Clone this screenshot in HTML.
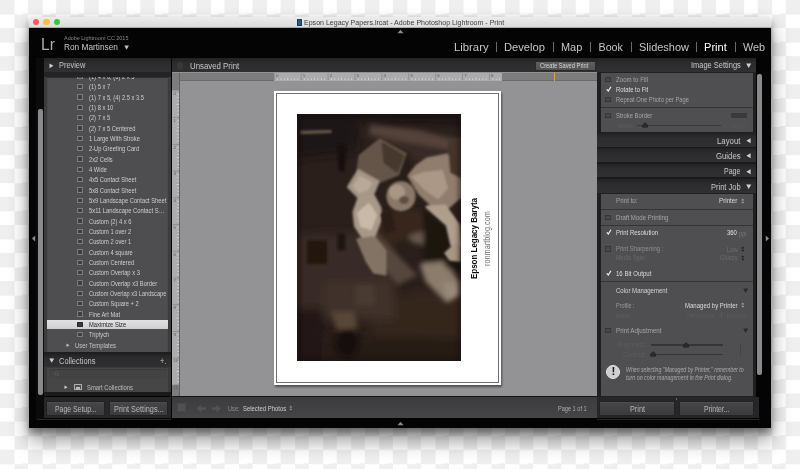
<!DOCTYPE html>
<html><head><meta charset="utf-8"><title>Epson Legacy Papers.lrcat - Adobe Photoshop Lightroom - Print</title>
<style>
html,body{margin:0;padding:0;}
body{width:800px;height:469px;overflow:hidden;position:relative;background:#fff;font-family:"Liberation Sans",sans-serif;}
#root{will-change:transform;position:absolute;left:0;top:0;width:800px;height:469px;overflow:hidden;
 background:conic-gradient(#fff 25%,#efefef 0 50%,#fff 0 75%,#efefef 0) 0 0/28.07px 28.12px;}
#root div{position:absolute;box-sizing:border-box;}
.t{position:absolute;white-space:nowrap;transform-origin:0 50%;}
svg{position:absolute;overflow:visible;}
</style></head><body><div id="root">
<div style="left:28.90px;top:16.60px;width:742.40px;height:411.00px;box-shadow:0 12px 20px rgba(0,0,0,.42),0 4px 7px rgba(0,0,0,.36);border-radius:2.5px 2.5px 0 0;"></div>
<div style="left:28.90px;top:22.60px;width:742.40px;height:405.00px;background:#040404;"></div>
<div style="left:28.90px;top:16.60px;width:742.40px;height:11.00px;background:linear-gradient(#ececec,#dbdbdb);border-radius:2.5px 2.5px 0 0;border-bottom:0.5px solid #aaa;"></div>
<div style="left:33.10px;top:18.90px;width:6.40px;height:6.40px;border-radius:50%;background:#fc5753;"></div>
<div style="left:43.40px;top:18.90px;width:6.40px;height:6.40px;border-radius:50%;background:#fdbc40;"></div>
<div style="left:53.80px;top:18.90px;width:6.40px;height:6.40px;border-radius:50%;background:#33c748;"></div>
<div style="left:296.60px;top:18.90px;width:5.00px;height:7.00px;background:#2b5a8c;border-radius:0.5px;border:0.5px solid #1d3550;"></div>
<span class="t" style="left:303.60px;top:18.88px;font-size:7.20px;line-height:8.64px;color:#3c3c3c;transform:scaleX(0.9803);">Epson Legacy Papers.lrcat - Adobe Photoshop Lightroom - Print</span>
<span class="t" style="left:40.60px;top:34.56px;font-size:16.40px;line-height:19.68px;color:#adadad;transform:scaleX(0.9463);">Lr</span>
<span class="t" style="left:63.80px;top:35.44px;font-size:5.60px;line-height:6.72px;color:#8c8c8c;transform:scaleX(0.9727);">Adobe Lightroom CC 2015</span>
<span class="t" style="left:63.80px;top:41.84px;font-size:8.60px;line-height:10.32px;color:#c9c9c9;transform:scaleX(0.9655);">Ron Martinsen</span>
<svg style="left:124px;top:44.5px" width="6" height="6"><path d="M0.3 0.5h4.6l-2.3 4.2z" fill="#c0c0c0"/></svg>
<span class="t" style="left:453.60px;top:40.78px;font-size:10.70px;line-height:12.84px;color:#c6c6c6;transform:scaleX(1.0579);">Library</span>
<span class="t" style="left:504.00px;top:40.78px;font-size:10.70px;line-height:12.84px;color:#c6c6c6;transform:scaleX(1.0443);">Develop</span>
<span class="t" style="left:561.00px;top:40.78px;font-size:10.70px;line-height:12.84px;color:#c6c6c6;transform:scaleX(1.0233);">Map</span>
<span class="t" style="left:598.50px;top:40.78px;font-size:10.70px;line-height:12.84px;color:#c6c6c6;">Book</span>
<span class="t" style="left:639.00px;top:40.78px;font-size:10.70px;line-height:12.84px;color:#c6c6c6;transform:scaleX(1.0251);">Slideshow</span>
<span class="t" style="left:704.20px;top:40.78px;font-size:10.70px;line-height:12.84px;color:#ffffff;transform:scaleX(1.0363);">Print</span>
<span class="t" style="left:743.00px;top:40.78px;font-size:10.70px;line-height:12.84px;color:#c6c6c6;transform:scaleX(1.0088);">Web</span>
<div style="left:495.60px;top:42.30px;width:0.90px;height:10.00px;background:#6a6a6a;"></div>
<div style="left:552.60px;top:42.30px;width:0.90px;height:10.00px;background:#6a6a6a;"></div>
<div style="left:590.10px;top:42.30px;width:0.90px;height:10.00px;background:#6a6a6a;"></div>
<div style="left:630.60px;top:42.30px;width:0.90px;height:10.00px;background:#6a6a6a;"></div>
<div style="left:696.30px;top:42.30px;width:0.90px;height:10.00px;background:#6a6a6a;"></div>
<div style="left:734.60px;top:42.30px;width:0.90px;height:10.00px;background:#6a6a6a;"></div>
<svg style="left:397px;top:29.4px" width="8" height="5"><path d="M0.5 4.2h6l-3-3.4z" fill="#8a8a8a"/></svg>
<svg style="left:397px;top:420.5px" width="8" height="5"><path d="M0.5 4.2h6l-3-3.4z" fill="#8a8a8a"/></svg>
<svg style="left:31px;top:235.3px" width="5" height="8"><path d="M4.2 0.6v6l-3.2-3z" fill="#8e8e8e"/></svg>
<svg style="left:764.9px;top:235.3px" width="5" height="8"><path d="M0.8 0.6v6l3.2-3z" fill="#8e8e8e"/></svg>
<div style="left:36.00px;top:57.80px;width:7.80px;height:361.40px;background:#0b0b0b;"></div>
<div style="left:38.10px;top:108.70px;width:4.60px;height:286.30px;background:#8a8a8c;border-radius:2px;"></div>
<div style="left:43.80px;top:58.20px;width:127.20px;height:14.20px;background:linear-gradient(#222223,#2c2b2d 35%,#302f31);"></div>
<svg style="left:49px;top:63.1px" width="6" height="6"><path d="M0.5 0.4v4.8l4-2.4z" fill="#d0d0d0"/></svg>
<span class="t" style="left:58.70px;top:60.10px;font-size:8.50px;line-height:10.20px;color:#c4c4c4;transform:scaleX(0.8699);">Preview</span>
<div style="left:43.80px;top:72.40px;width:127.20px;height:5.00px;background:#232323;"></div>
<div style="left:43.80px;top:77.20px;width:127.20px;height:274.60px;background:#3c3c3c;"></div>
<div style="left:47.00px;top:77.20px;width:120.80px;height:274.60px;background:#4e4e50;box-shadow:inset 0 1px 1px #2c2c2c;"></div>
<div style="left:43.80px;top:77.4px;width:127.20px;height:273.6px;overflow:hidden;">
<div style="left:33.40px;top:-3.73px;width:6.00px;height:5.40px;border:0.7px solid #7c7c7c;background:#3f3f3f;border-radius:0.5px;"></div>
<span class="t" style="left:44.80px;top:-4.33px;font-size:6.50px;line-height:7.80px;color:#cecece;transform:scaleX(0.8850);">(1) 4 x 6, (6) 2 x 3</span>
<div style="left:33.40px;top:6.60px;width:6.00px;height:5.40px;border:0.7px solid #7c7c7c;background:#3f3f3f;border-radius:0.5px;"></div>
<span class="t" style="left:44.80px;top:6.00px;font-size:6.50px;line-height:7.80px;color:#cecece;transform:scaleX(0.8850);">(1) 5 x 7</span>
<div style="left:33.40px;top:16.93px;width:6.00px;height:5.40px;border:0.7px solid #7c7c7c;background:#3f3f3f;border-radius:0.5px;"></div>
<span class="t" style="left:44.80px;top:16.33px;font-size:6.50px;line-height:7.80px;color:#cecece;transform:scaleX(0.8850);">(1) 7 x 5, (4) 2.5 x 3.5</span>
<div style="left:33.40px;top:27.27px;width:6.00px;height:5.40px;border:0.7px solid #7c7c7c;background:#3f3f3f;border-radius:0.5px;"></div>
<span class="t" style="left:44.80px;top:26.67px;font-size:6.50px;line-height:7.80px;color:#cecece;transform:scaleX(0.8850);">(1) 8 x 10</span>
<div style="left:33.40px;top:37.60px;width:6.00px;height:5.40px;border:0.7px solid #7c7c7c;background:#3f3f3f;border-radius:0.5px;"></div>
<span class="t" style="left:44.80px;top:37.00px;font-size:6.50px;line-height:7.80px;color:#cecece;transform:scaleX(0.8850);">(2) 7 x 5</span>
<div style="left:33.40px;top:47.93px;width:6.00px;height:5.40px;border:0.7px solid #7c7c7c;background:#3f3f3f;border-radius:0.5px;"></div>
<span class="t" style="left:44.80px;top:47.33px;font-size:6.50px;line-height:7.80px;color:#cecece;transform:scaleX(0.8850);">(2) 7 x 5 Centered</span>
<div style="left:33.40px;top:58.26px;width:6.00px;height:5.40px;border:0.7px solid #7c7c7c;background:#3f3f3f;border-radius:0.5px;"></div>
<span class="t" style="left:44.80px;top:57.66px;font-size:6.50px;line-height:7.80px;color:#cecece;transform:scaleX(0.8850);">1 Large With Stroke</span>
<div style="left:33.40px;top:68.60px;width:6.00px;height:5.40px;border:0.7px solid #7c7c7c;background:#3f3f3f;border-radius:0.5px;"></div>
<span class="t" style="left:44.80px;top:68.00px;font-size:6.50px;line-height:7.80px;color:#cecece;transform:scaleX(0.8850);">2-Up Greeting Card</span>
<div style="left:33.40px;top:78.93px;width:6.00px;height:5.40px;border:0.7px solid #7c7c7c;background:#3f3f3f;border-radius:0.5px;"></div>
<span class="t" style="left:44.80px;top:78.33px;font-size:6.50px;line-height:7.80px;color:#cecece;transform:scaleX(0.8850);">2x2 Cells</span>
<div style="left:33.40px;top:89.26px;width:6.00px;height:5.40px;border:0.7px solid #7c7c7c;background:#3f3f3f;border-radius:0.5px;"></div>
<span class="t" style="left:44.80px;top:88.66px;font-size:6.50px;line-height:7.80px;color:#cecece;transform:scaleX(0.8850);">4 Wide</span>
<div style="left:33.40px;top:99.60px;width:6.00px;height:5.40px;border:0.7px solid #7c7c7c;background:#3f3f3f;border-radius:0.5px;"></div>
<span class="t" style="left:44.80px;top:99.00px;font-size:6.50px;line-height:7.80px;color:#cecece;transform:scaleX(0.8850);">4x5 Contact Sheet</span>
<div style="left:33.40px;top:109.93px;width:6.00px;height:5.40px;border:0.7px solid #7c7c7c;background:#3f3f3f;border-radius:0.5px;"></div>
<span class="t" style="left:44.80px;top:109.33px;font-size:6.50px;line-height:7.80px;color:#cecece;transform:scaleX(0.8850);">5x8 Contact Sheet</span>
<div style="left:33.40px;top:120.26px;width:6.00px;height:5.40px;border:0.7px solid #7c7c7c;background:#3f3f3f;border-radius:0.5px;"></div>
<span class="t" style="left:44.80px;top:119.66px;font-size:6.50px;line-height:7.80px;color:#cecece;transform:scaleX(0.8876);">5x9 Landscape Contact Sheet</span>
<div style="left:33.40px;top:130.60px;width:6.00px;height:5.40px;border:0.7px solid #7c7c7c;background:#3f3f3f;border-radius:0.5px;"></div>
<span class="t" style="left:44.80px;top:130.00px;font-size:6.50px;line-height:7.80px;color:#cecece;transform:scaleX(0.8980);">5x11 Landscape Contact S…</span>
<div style="left:33.40px;top:140.93px;width:6.00px;height:5.40px;border:0.7px solid #7c7c7c;background:#3f3f3f;border-radius:0.5px;"></div>
<span class="t" style="left:44.80px;top:140.33px;font-size:6.50px;line-height:7.80px;color:#cecece;transform:scaleX(0.8850);">Custom (2) 4 x 6</span>
<div style="left:33.40px;top:151.26px;width:6.00px;height:5.40px;border:0.7px solid #7c7c7c;background:#3f3f3f;border-radius:0.5px;"></div>
<span class="t" style="left:44.80px;top:150.66px;font-size:6.50px;line-height:7.80px;color:#cecece;transform:scaleX(0.8850);">Custom 1 over 2</span>
<div style="left:33.40px;top:161.59px;width:6.00px;height:5.40px;border:0.7px solid #7c7c7c;background:#3f3f3f;border-radius:0.5px;"></div>
<span class="t" style="left:44.80px;top:161.00px;font-size:6.50px;line-height:7.80px;color:#cecece;transform:scaleX(0.8850);">Custom 2 over 1</span>
<div style="left:33.40px;top:171.93px;width:6.00px;height:5.40px;border:0.7px solid #7c7c7c;background:#3f3f3f;border-radius:0.5px;"></div>
<span class="t" style="left:44.80px;top:171.33px;font-size:6.50px;line-height:7.80px;color:#cecece;transform:scaleX(0.8850);">Custom 4 square</span>
<div style="left:33.40px;top:182.26px;width:6.00px;height:5.40px;border:0.7px solid #7c7c7c;background:#3f3f3f;border-radius:0.5px;"></div>
<span class="t" style="left:44.80px;top:181.66px;font-size:6.50px;line-height:7.80px;color:#cecece;transform:scaleX(0.8850);">Custom Centered</span>
<div style="left:33.40px;top:192.59px;width:6.00px;height:5.40px;border:0.7px solid #7c7c7c;background:#3f3f3f;border-radius:0.5px;"></div>
<span class="t" style="left:44.80px;top:191.99px;font-size:6.50px;line-height:7.80px;color:#cecece;transform:scaleX(0.8850);">Custom Overlap x 3</span>
<div style="left:33.40px;top:202.93px;width:6.00px;height:5.40px;border:0.7px solid #7c7c7c;background:#3f3f3f;border-radius:0.5px;"></div>
<span class="t" style="left:44.80px;top:202.33px;font-size:6.50px;line-height:7.80px;color:#cecece;transform:scaleX(0.8850);">Custom Overlap x3 Border</span>
<div style="left:33.40px;top:213.26px;width:6.00px;height:5.40px;border:0.7px solid #7c7c7c;background:#3f3f3f;border-radius:0.5px;"></div>
<span class="t" style="left:44.80px;top:212.66px;font-size:6.50px;line-height:7.80px;color:#cecece;transform:scaleX(0.8662);">Custom Overlap x3 Landscape</span>
<div style="left:33.40px;top:223.59px;width:6.00px;height:5.40px;border:0.7px solid #7c7c7c;background:#3f3f3f;border-radius:0.5px;"></div>
<span class="t" style="left:44.80px;top:222.99px;font-size:6.50px;line-height:7.80px;color:#cecece;transform:scaleX(0.8850);">Custom Square + 2</span>
<div style="left:33.40px;top:233.93px;width:6.00px;height:5.40px;border:0.7px solid #7c7c7c;background:#3f3f3f;border-radius:0.5px;"></div>
<span class="t" style="left:44.80px;top:233.33px;font-size:6.50px;line-height:7.80px;color:#cecece;transform:scaleX(0.8850);">Fine Art Mat</span>
<div style="left:3.20px;top:243.06px;width:120.80px;height:8.60px;background:linear-gradient(#e2e2e2,#cfcfcf);"></div>
<div style="left:33.40px;top:244.26px;width:6.00px;height:5.40px;border:0.7px solid #2a2a2a;background:#3a3a3a;border-radius:0.5px;"></div>
<span class="t" style="left:44.80px;top:243.66px;font-size:6.50px;line-height:7.80px;color:#1e1e1e;transform:scaleX(0.8850);">Maximize Size</span>
<div style="left:33.40px;top:254.59px;width:6.00px;height:5.40px;border:0.7px solid #7c7c7c;background:#3f3f3f;border-radius:0.5px;"></div>
<span class="t" style="left:44.80px;top:253.99px;font-size:6.50px;line-height:7.80px;color:#cecece;transform:scaleX(0.8850);">Triptych</span>
<svg style="left:22.00px;top:265.80px" width="5" height="5"><path d="M0.5 0.4v3.6l3-1.8z" fill="#c0c0c0"/></svg>
<span class="t" style="left:31.40px;top:264.50px;font-size:6.50px;line-height:7.80px;color:#c4c4c4;transform:scaleX(0.9103);">User Templates</span>
</div>
<div style="left:43.80px;top:351.80px;width:127.20px;height:2.20px;background:#1e1e1e;"></div>
<div style="left:43.80px;top:354.00px;width:127.20px;height:12.60px;background:linear-gradient(#222223,#2c2b2d 35%,#302f31);"></div>
<svg style="left:48.6px;top:358.2px" width="6" height="6"><path d="M0.3 0.5h4.8l-2.4 4.2z" fill="#d0d0d0"/></svg>
<span class="t" style="left:58.70px;top:355.70px;font-size:8.50px;line-height:10.20px;color:#c4c4c4;transform:scaleX(0.8779);">Collections</span>
<span class="t" style="left:159.80px;top:355.00px;font-size:9.50px;line-height:11.40px;color:#c8c8c8;transform:scaleX(0.7573);">+.</span>
<div style="left:43.80px;top:366.60px;width:127.20px;height:25.40px;background:#3a3a3a;"></div>
<div style="left:47.00px;top:367.60px;width:121.40px;height:24.40px;background:#464646;"></div>
<div style="left:48.60px;top:368.60px;width:118.00px;height:10.20px;background:#434343;border-top:0.8px solid #393939;border-radius:3px;"></div>
<svg style="left:53.5px;top:371px" width="6" height="6"><circle cx="2.4" cy="2.4" r="1.7" fill="none" stroke="#5c5c5c" stroke-width="0.8"/><path d="M3.6 3.6l1.6 1.6" stroke="#5c5c5c" stroke-width="0.8"/></svg>
<svg style="left:63.6px;top:384.9px" width="5" height="5"><path d="M0.5 0.4v3.6l3-1.8z" fill="#d0d0d0"/></svg>
<div style="left:73.80px;top:384.00px;width:8.60px;height:6.40px;border:0.8px solid #b0b0b0;background:#4f4f4f;border-radius:0.6px;"></div>
<div style="left:75.70px;top:386.80px;width:4.80px;height:2.00px;background:#bdbdbd;"></div>
<span class="t" style="left:87.00px;top:383.60px;font-size:6.50px;line-height:7.80px;color:#bcbcbc;transform:scaleX(0.9031);">Smart Collections</span>
<div style="left:43.80px;top:392.00px;width:127.20px;height:4.40px;background:#1b1b1b;"></div>
<div style="left:43.80px;top:396.60px;width:127.20px;height:21.40px;background:#272628;"></div>
<div style="left:37.30px;top:419.00px;width:133.70px;height:0.70px;background:#262626;"></div>
<div style="left:45.90px;top:401.00px;width:59.10px;height:15.00px;background:linear-gradient(#464548,#3b3a3d);border-radius:1.5px;border:0.6px solid #222;box-shadow:inset 0 0.6px 0 #56555a;"></div>
<span class="t" style="left:54.60px;top:403.70px;font-size:8.50px;line-height:10.20px;color:#b8b8b8;transform:scaleX(0.8095);">Page Setup...</span>
<div style="left:108.80px;top:401.00px;width:59.60px;height:15.00px;background:linear-gradient(#464548,#3b3a3d);border-radius:1.5px;border:0.6px solid #222;box-shadow:inset 0 0.6px 0 #56555a;"></div>
<span class="t" style="left:113.75px;top:403.70px;font-size:8.50px;line-height:10.20px;color:#b8b8b8;transform:scaleX(0.8623);">Print Settings...</span>
<div style="left:172.00px;top:58.20px;width:424.60px;height:14.80px;background:linear-gradient(#222223,#2c2b2d 35%,#302f31);"></div>
<div style="left:176.50px;top:61.60px;width:6.00px;height:8.00px;background:#383838;border-radius:3px;"></div>
<span class="t" style="left:190.00px;top:60.60px;font-size:8.50px;line-height:10.20px;color:#c6c6c6;transform:scaleX(0.9216);">Unsaved Print</span>
<div style="left:534.80px;top:61.00px;width:60.80px;height:9.60px;background:linear-gradient(#606060,#525252);border-radius:1.2px;border:0.5px solid #2a2a2a;"></div>
<span class="t" style="left:540.20px;top:61.76px;font-size:6.90px;line-height:8.28px;color:#d6d6d6;transform:scaleX(0.8302);">Create Saved Print</span>
<div style="left:172.00px;top:72.40px;width:424.60px;height:323.80px;background:#939294;"></div>
<div style="left:172.00px;top:73.00px;width:424.60px;height:7.80px;background:#7c7c7c;border-bottom:0.7px solid #6a6a6a;"></div>
<div style="left:172.00px;top:73.00px;width:7.60px;height:323.20px;background:#7c7c7c;border-right:0.7px solid #606060;"></div>
<div style="left:273.60px;top:73.40px;width:228.20px;height:7.20px;background:#ababab;"></div>
<div style="left:172.40px;top:90.40px;width:6.60px;height:294.20px;background:#ababab;"></div>
<svg style="left:0;top:72.4px" width="800" height="8"><rect x="273.90" y="1.20" width="0.8" height="7.00" fill="#8a8a8a"/><rect x="277.26" y="6.50" width="0.8" height="1.70" fill="#dcdcdc"/><rect x="280.63" y="6.50" width="0.8" height="1.70" fill="#dcdcdc"/><rect x="283.99" y="6.50" width="0.8" height="1.70" fill="#dcdcdc"/><rect x="287.35" y="5.60" width="0.8" height="2.60" fill="#dcdcdc"/><rect x="290.71" y="6.50" width="0.8" height="1.70" fill="#dcdcdc"/><rect x="294.08" y="6.50" width="0.8" height="1.70" fill="#dcdcdc"/><rect x="297.44" y="6.50" width="0.8" height="1.70" fill="#dcdcdc"/><rect x="300.80" y="1.20" width="0.8" height="7.00" fill="#8a8a8a"/><rect x="304.16" y="6.50" width="0.8" height="1.70" fill="#dcdcdc"/><rect x="307.53" y="6.50" width="0.8" height="1.70" fill="#dcdcdc"/><rect x="310.89" y="6.50" width="0.8" height="1.70" fill="#dcdcdc"/><rect x="314.25" y="5.60" width="0.8" height="2.60" fill="#dcdcdc"/><rect x="317.61" y="6.50" width="0.8" height="1.70" fill="#dcdcdc"/><rect x="320.98" y="6.50" width="0.8" height="1.70" fill="#dcdcdc"/><rect x="324.34" y="6.50" width="0.8" height="1.70" fill="#dcdcdc"/><rect x="327.70" y="1.20" width="0.8" height="7.00" fill="#8a8a8a"/><rect x="331.06" y="6.50" width="0.8" height="1.70" fill="#dcdcdc"/><rect x="334.43" y="6.50" width="0.8" height="1.70" fill="#dcdcdc"/><rect x="337.79" y="6.50" width="0.8" height="1.70" fill="#dcdcdc"/><rect x="341.15" y="5.60" width="0.8" height="2.60" fill="#dcdcdc"/><rect x="344.51" y="6.50" width="0.8" height="1.70" fill="#dcdcdc"/><rect x="347.88" y="6.50" width="0.8" height="1.70" fill="#dcdcdc"/><rect x="351.24" y="6.50" width="0.8" height="1.70" fill="#dcdcdc"/><rect x="354.60" y="1.20" width="0.8" height="7.00" fill="#8a8a8a"/><rect x="357.96" y="6.50" width="0.8" height="1.70" fill="#dcdcdc"/><rect x="361.33" y="6.50" width="0.8" height="1.70" fill="#dcdcdc"/><rect x="364.69" y="6.50" width="0.8" height="1.70" fill="#dcdcdc"/><rect x="368.05" y="5.60" width="0.8" height="2.60" fill="#dcdcdc"/><rect x="371.41" y="6.50" width="0.8" height="1.70" fill="#dcdcdc"/><rect x="374.78" y="6.50" width="0.8" height="1.70" fill="#dcdcdc"/><rect x="378.14" y="6.50" width="0.8" height="1.70" fill="#dcdcdc"/><rect x="381.50" y="1.20" width="0.8" height="7.00" fill="#8a8a8a"/><rect x="384.86" y="6.50" width="0.8" height="1.70" fill="#dcdcdc"/><rect x="388.23" y="6.50" width="0.8" height="1.70" fill="#dcdcdc"/><rect x="391.59" y="6.50" width="0.8" height="1.70" fill="#dcdcdc"/><rect x="394.95" y="5.60" width="0.8" height="2.60" fill="#dcdcdc"/><rect x="398.31" y="6.50" width="0.8" height="1.70" fill="#dcdcdc"/><rect x="401.68" y="6.50" width="0.8" height="1.70" fill="#dcdcdc"/><rect x="405.04" y="6.50" width="0.8" height="1.70" fill="#dcdcdc"/><rect x="408.40" y="1.20" width="0.8" height="7.00" fill="#8a8a8a"/><rect x="411.76" y="6.50" width="0.8" height="1.70" fill="#dcdcdc"/><rect x="415.12" y="6.50" width="0.8" height="1.70" fill="#dcdcdc"/><rect x="418.49" y="6.50" width="0.8" height="1.70" fill="#dcdcdc"/><rect x="421.85" y="5.60" width="0.8" height="2.60" fill="#dcdcdc"/><rect x="425.21" y="6.50" width="0.8" height="1.70" fill="#dcdcdc"/><rect x="428.58" y="6.50" width="0.8" height="1.70" fill="#dcdcdc"/><rect x="431.94" y="6.50" width="0.8" height="1.70" fill="#dcdcdc"/><rect x="435.30" y="1.20" width="0.8" height="7.00" fill="#8a8a8a"/><rect x="438.66" y="6.50" width="0.8" height="1.70" fill="#dcdcdc"/><rect x="442.03" y="6.50" width="0.8" height="1.70" fill="#dcdcdc"/><rect x="445.39" y="6.50" width="0.8" height="1.70" fill="#dcdcdc"/><rect x="448.75" y="5.60" width="0.8" height="2.60" fill="#dcdcdc"/><rect x="452.11" y="6.50" width="0.8" height="1.70" fill="#dcdcdc"/><rect x="455.48" y="6.50" width="0.8" height="1.70" fill="#dcdcdc"/><rect x="458.84" y="6.50" width="0.8" height="1.70" fill="#dcdcdc"/><rect x="462.20" y="1.20" width="0.8" height="7.00" fill="#8a8a8a"/><rect x="465.56" y="6.50" width="0.8" height="1.70" fill="#dcdcdc"/><rect x="468.93" y="6.50" width="0.8" height="1.70" fill="#dcdcdc"/><rect x="472.29" y="6.50" width="0.8" height="1.70" fill="#dcdcdc"/><rect x="475.65" y="5.60" width="0.8" height="2.60" fill="#dcdcdc"/><rect x="479.01" y="6.50" width="0.8" height="1.70" fill="#dcdcdc"/><rect x="482.38" y="6.50" width="0.8" height="1.70" fill="#dcdcdc"/><rect x="485.74" y="6.50" width="0.8" height="1.70" fill="#dcdcdc"/><rect x="489.10" y="1.20" width="0.8" height="7.00" fill="#8a8a8a"/><rect x="492.46" y="6.50" width="0.8" height="1.70" fill="#dcdcdc"/><rect x="495.83" y="6.50" width="0.8" height="1.70" fill="#dcdcdc"/><rect x="499.19" y="6.50" width="0.8" height="1.70" fill="#dcdcdc"/></svg>
<span class="t" style="left:275.90px;top:73.46px;font-size:4.40px;line-height:5.28px;color:#5a5a5a;">0</span>
<span class="t" style="left:302.80px;top:73.46px;font-size:4.40px;line-height:5.28px;color:#5a5a5a;">1</span>
<span class="t" style="left:329.70px;top:73.46px;font-size:4.40px;line-height:5.28px;color:#5a5a5a;">2</span>
<span class="t" style="left:356.60px;top:73.46px;font-size:4.40px;line-height:5.28px;color:#5a5a5a;">3</span>
<span class="t" style="left:383.50px;top:73.46px;font-size:4.40px;line-height:5.28px;color:#5a5a5a;">4</span>
<span class="t" style="left:410.40px;top:73.46px;font-size:4.40px;line-height:5.28px;color:#5a5a5a;">5</span>
<span class="t" style="left:437.30px;top:73.46px;font-size:4.40px;line-height:5.28px;color:#5a5a5a;">6</span>
<span class="t" style="left:464.20px;top:73.46px;font-size:4.40px;line-height:5.28px;color:#5a5a5a;">7</span>
<span class="t" style="left:491.10px;top:73.46px;font-size:4.40px;line-height:5.28px;color:#5a5a5a;">8</span>
<svg style="left:0;top:0" width="800" height="469"><rect x="172.70" y="90.50" width="6.30" height="0.8" fill="#8a8a8a"/><rect x="177.40" y="93.84" width="1.60" height="0.8" fill="#dcdcdc"/><rect x="177.40" y="97.18" width="1.60" height="0.8" fill="#dcdcdc"/><rect x="177.40" y="100.52" width="1.60" height="0.8" fill="#dcdcdc"/><rect x="176.60" y="103.86" width="2.40" height="0.8" fill="#dcdcdc"/><rect x="177.40" y="107.20" width="1.60" height="0.8" fill="#dcdcdc"/><rect x="177.40" y="110.54" width="1.60" height="0.8" fill="#dcdcdc"/><rect x="177.40" y="113.88" width="1.60" height="0.8" fill="#dcdcdc"/><rect x="172.70" y="117.22" width="6.30" height="0.8" fill="#8a8a8a"/><rect x="177.40" y="120.56" width="1.60" height="0.8" fill="#dcdcdc"/><rect x="177.40" y="123.90" width="1.60" height="0.8" fill="#dcdcdc"/><rect x="177.40" y="127.24" width="1.60" height="0.8" fill="#dcdcdc"/><rect x="176.60" y="130.58" width="2.40" height="0.8" fill="#dcdcdc"/><rect x="177.40" y="133.92" width="1.60" height="0.8" fill="#dcdcdc"/><rect x="177.40" y="137.26" width="1.60" height="0.8" fill="#dcdcdc"/><rect x="177.40" y="140.60" width="1.60" height="0.8" fill="#dcdcdc"/><rect x="172.70" y="143.94" width="6.30" height="0.8" fill="#8a8a8a"/><rect x="177.40" y="147.28" width="1.60" height="0.8" fill="#dcdcdc"/><rect x="177.40" y="150.62" width="1.60" height="0.8" fill="#dcdcdc"/><rect x="177.40" y="153.96" width="1.60" height="0.8" fill="#dcdcdc"/><rect x="176.60" y="157.30" width="2.40" height="0.8" fill="#dcdcdc"/><rect x="177.40" y="160.64" width="1.60" height="0.8" fill="#dcdcdc"/><rect x="177.40" y="163.98" width="1.60" height="0.8" fill="#dcdcdc"/><rect x="177.40" y="167.32" width="1.60" height="0.8" fill="#dcdcdc"/><rect x="172.70" y="170.66" width="6.30" height="0.8" fill="#8a8a8a"/><rect x="177.40" y="174.00" width="1.60" height="0.8" fill="#dcdcdc"/><rect x="177.40" y="177.34" width="1.60" height="0.8" fill="#dcdcdc"/><rect x="177.40" y="180.68" width="1.60" height="0.8" fill="#dcdcdc"/><rect x="176.60" y="184.02" width="2.40" height="0.8" fill="#dcdcdc"/><rect x="177.40" y="187.36" width="1.60" height="0.8" fill="#dcdcdc"/><rect x="177.40" y="190.70" width="1.60" height="0.8" fill="#dcdcdc"/><rect x="177.40" y="194.04" width="1.60" height="0.8" fill="#dcdcdc"/><rect x="172.70" y="197.38" width="6.30" height="0.8" fill="#8a8a8a"/><rect x="177.40" y="200.72" width="1.60" height="0.8" fill="#dcdcdc"/><rect x="177.40" y="204.06" width="1.60" height="0.8" fill="#dcdcdc"/><rect x="177.40" y="207.40" width="1.60" height="0.8" fill="#dcdcdc"/><rect x="176.60" y="210.74" width="2.40" height="0.8" fill="#dcdcdc"/><rect x="177.40" y="214.08" width="1.60" height="0.8" fill="#dcdcdc"/><rect x="177.40" y="217.42" width="1.60" height="0.8" fill="#dcdcdc"/><rect x="177.40" y="220.76" width="1.60" height="0.8" fill="#dcdcdc"/><rect x="172.70" y="224.10" width="6.30" height="0.8" fill="#8a8a8a"/><rect x="177.40" y="227.44" width="1.60" height="0.8" fill="#dcdcdc"/><rect x="177.40" y="230.78" width="1.60" height="0.8" fill="#dcdcdc"/><rect x="177.40" y="234.12" width="1.60" height="0.8" fill="#dcdcdc"/><rect x="176.60" y="237.46" width="2.40" height="0.8" fill="#dcdcdc"/><rect x="177.40" y="240.80" width="1.60" height="0.8" fill="#dcdcdc"/><rect x="177.40" y="244.14" width="1.60" height="0.8" fill="#dcdcdc"/><rect x="177.40" y="247.48" width="1.60" height="0.8" fill="#dcdcdc"/><rect x="172.70" y="250.82" width="6.30" height="0.8" fill="#8a8a8a"/><rect x="177.40" y="254.16" width="1.60" height="0.8" fill="#dcdcdc"/><rect x="177.40" y="257.50" width="1.60" height="0.8" fill="#dcdcdc"/><rect x="177.40" y="260.84" width="1.60" height="0.8" fill="#dcdcdc"/><rect x="176.60" y="264.18" width="2.40" height="0.8" fill="#dcdcdc"/><rect x="177.40" y="267.52" width="1.60" height="0.8" fill="#dcdcdc"/><rect x="177.40" y="270.86" width="1.60" height="0.8" fill="#dcdcdc"/><rect x="177.40" y="274.20" width="1.60" height="0.8" fill="#dcdcdc"/><rect x="172.70" y="277.54" width="6.30" height="0.8" fill="#8a8a8a"/><rect x="177.40" y="280.88" width="1.60" height="0.8" fill="#dcdcdc"/><rect x="177.40" y="284.22" width="1.60" height="0.8" fill="#dcdcdc"/><rect x="177.40" y="287.56" width="1.60" height="0.8" fill="#dcdcdc"/><rect x="176.60" y="290.90" width="2.40" height="0.8" fill="#dcdcdc"/><rect x="177.40" y="294.24" width="1.60" height="0.8" fill="#dcdcdc"/><rect x="177.40" y="297.58" width="1.60" height="0.8" fill="#dcdcdc"/><rect x="177.40" y="300.92" width="1.60" height="0.8" fill="#dcdcdc"/><rect x="172.70" y="304.26" width="6.30" height="0.8" fill="#8a8a8a"/><rect x="177.40" y="307.60" width="1.60" height="0.8" fill="#dcdcdc"/><rect x="177.40" y="310.94" width="1.60" height="0.8" fill="#dcdcdc"/><rect x="177.40" y="314.28" width="1.60" height="0.8" fill="#dcdcdc"/><rect x="176.60" y="317.62" width="2.40" height="0.8" fill="#dcdcdc"/><rect x="177.40" y="320.96" width="1.60" height="0.8" fill="#dcdcdc"/><rect x="177.40" y="324.30" width="1.60" height="0.8" fill="#dcdcdc"/><rect x="177.40" y="327.64" width="1.60" height="0.8" fill="#dcdcdc"/><rect x="172.70" y="330.98" width="6.30" height="0.8" fill="#8a8a8a"/><rect x="177.40" y="334.32" width="1.60" height="0.8" fill="#dcdcdc"/><rect x="177.40" y="337.66" width="1.60" height="0.8" fill="#dcdcdc"/><rect x="177.40" y="341.00" width="1.60" height="0.8" fill="#dcdcdc"/><rect x="176.60" y="344.34" width="2.40" height="0.8" fill="#dcdcdc"/><rect x="177.40" y="347.68" width="1.60" height="0.8" fill="#dcdcdc"/><rect x="177.40" y="351.02" width="1.60" height="0.8" fill="#dcdcdc"/><rect x="177.40" y="354.36" width="1.60" height="0.8" fill="#dcdcdc"/><rect x="172.70" y="357.70" width="6.30" height="0.8" fill="#8a8a8a"/><rect x="177.40" y="361.04" width="1.60" height="0.8" fill="#dcdcdc"/><rect x="177.40" y="364.38" width="1.60" height="0.8" fill="#dcdcdc"/><rect x="177.40" y="367.72" width="1.60" height="0.8" fill="#dcdcdc"/><rect x="176.60" y="371.06" width="2.40" height="0.8" fill="#dcdcdc"/><rect x="177.40" y="374.40" width="1.60" height="0.8" fill="#dcdcdc"/><rect x="177.40" y="377.74" width="1.60" height="0.8" fill="#dcdcdc"/><rect x="177.40" y="381.08" width="1.60" height="0.8" fill="#dcdcdc"/><rect x="172.70" y="384.42" width="6.30" height="0.8" fill="#8a8a8a"/></svg>
<span class="t" style="left:173.40px;top:91.18px;font-size:4.20px;line-height:5.04px;color:#5a5a5a;">0</span>
<span class="t" style="left:173.40px;top:117.90px;font-size:4.20px;line-height:5.04px;color:#5a5a5a;">1</span>
<span class="t" style="left:173.40px;top:144.62px;font-size:4.20px;line-height:5.04px;color:#5a5a5a;">2</span>
<span class="t" style="left:173.40px;top:171.34px;font-size:4.20px;line-height:5.04px;color:#5a5a5a;">3</span>
<span class="t" style="left:173.40px;top:198.06px;font-size:4.20px;line-height:5.04px;color:#5a5a5a;">4</span>
<span class="t" style="left:173.40px;top:224.78px;font-size:4.20px;line-height:5.04px;color:#5a5a5a;">5</span>
<span class="t" style="left:173.40px;top:251.50px;font-size:4.20px;line-height:5.04px;color:#5a5a5a;">6</span>
<span class="t" style="left:173.40px;top:278.22px;font-size:4.20px;line-height:5.04px;color:#5a5a5a;">7</span>
<span class="t" style="left:173.40px;top:304.94px;font-size:4.20px;line-height:5.04px;color:#5a5a5a;">8</span>
<span class="t" style="left:173.40px;top:331.66px;font-size:4.20px;line-height:5.04px;color:#5a5a5a;">9</span>
<span class="t" style="left:173.40px;top:358.38px;font-size:4.20px;line-height:5.04px;color:#5a5a5a;">10</span>
<span class="t" style="left:173.40px;top:385.10px;font-size:4.20px;line-height:5.04px;color:#5a5a5a;">11</span>
<div style="left:553.90px;top:73.20px;width:0.90px;height:7.40px;background:#d9a441;"></div>
<div style="left:273.80px;top:90.70px;width:227.60px;height:294.00px;background:#fff;box-shadow:0.6px 1.6px 2px rgba(0,0,0,.45);"></div>
<div style="left:276.40px;top:92.80px;width:222.60px;height:289.80px;border:1.2px solid #707070;background:#fff;"></div>
<svg style="left:297.0px;top:114.1px;overflow:hidden" width="164.2" height="247.3" viewBox="0 0 164.2 247.3"><defs><filter id="b5" x="-40%" y="-40%" width="180%" height="180%"><feGaussianBlur stdDeviation="5"/></filter><filter id="b3" x="-30%" y="-30%" width="160%" height="160%"><feGaussianBlur stdDeviation="2.4"/></filter><filter id="b15" x="-30%" y="-30%" width="160%" height="160%"><feGaussianBlur stdDeviation="1.3"/></filter><filter id="b08" x="-30%" y="-30%" width="160%" height="160%"><feGaussianBlur stdDeviation="0.7"/></filter><clipPath id="pc"><rect x="0" y="0" width="164.2" height="247.3"/></clipPath></defs><g clip-path="url(#pc)"><rect x="0" y="0" width="164.2" height="247.3" fill="#2a1f1b"/><g filter="url(#b5)"><polygon points="-8,-8 62,-8 58,36 -8,44" fill="#1d1512" stroke="#1d1512" stroke-width="3" stroke-linejoin="round" opacity="1"/><polygon points="55,-8 175,-8 175,10 55,8" fill="#1e1613" stroke="#1e1613" stroke-width="3" stroke-linejoin="round" opacity="1"/><polygon points="66,16 175,26 175,48 118,46 90,30" fill="#392b25" stroke="#392b25" stroke-width="3" stroke-linejoin="round" opacity="1"/><polygon points="0,122 92,120 96,196 0,198" fill="#382b25" stroke="#382b25" stroke-width="3" stroke-linejoin="round" opacity="1"/><polygon points="78,190 126,178 175,184 175,226 74,232" fill="#34251e" stroke="#34251e" stroke-width="3" stroke-linejoin="round" opacity="1"/><polygon points="28,170 96,168 96,204 28,204" fill="#41332b" stroke="#41332b" stroke-width="3" stroke-linejoin="round" opacity="1"/><polygon points="-8,196 26,196 26,260 -8,260" fill="#221814" stroke="#221814" stroke-width="3" stroke-linejoin="round" opacity="1"/><polygon points="26,222 175,226 175,260 26,260" fill="#261b17" stroke="#261b17" stroke-width="3" stroke-linejoin="round" opacity="1"/></g><g filter="url(#b3)"><polygon points="74,12 120,17 164,29 164,37 118,29 74,20" fill="#54433a" stroke="#54433a" stroke-width="2" stroke-linejoin="round" opacity="1"/><polygon points="84,32 110,42 110,60 92,58" fill="#261c18" stroke="#261c18" stroke-width="3" stroke-linejoin="round" opacity="1"/><polygon points="80,100 122,97 126,112 112,124 90,128 80,116" fill="#37281f" stroke="#37281f" stroke-width="3" stroke-linejoin="round" opacity="1"/><polygon points="112,122 128,117 128,131 115,128" fill="#66574d" stroke="#66574d" stroke-width="1" stroke-linejoin="round" opacity="1"/><polygon points="128,98 150,112 154,132 146,148 128,148" fill="#1b1310" stroke="#1b1310" stroke-width="3" stroke-linejoin="round" opacity="1"/><polygon points="64,127 79,121 118,161 101,169" fill="#57463c" stroke="#57463c" stroke-width="3" stroke-linejoin="round" opacity="1"/><polygon points="124.5,151 146,149 162,169 162,180.5 150,187 130,167" fill="#8b7b6c" stroke="#8b7b6c" stroke-width="3" stroke-linejoin="round" opacity="1"/><polygon points="146,168 161,172 161,181 151,186" fill="#9a8a7b" stroke="#9a8a7b" stroke-width="1" stroke-linejoin="round" opacity="1"/><polygon points="146,142 166,140 166,158 150,152" fill="#1d1411" stroke="#1d1411" stroke-width="3" stroke-linejoin="round" opacity="1"/><ellipse cx="50" cy="229" rx="12" ry="14" fill="#19110e" opacity="1" transform="rotate(0 50 229)"/><polygon points="36,199 56,199 59,213 41,214.5" fill="#584638" stroke="#584638" stroke-width="3" stroke-linejoin="round" opacity="1"/><polygon points="60,172 76,172 76,190 60,190" fill="#4e3f35" stroke="#4e3f35" stroke-width="3" stroke-linejoin="round" opacity="0.7"/></g><g filter="url(#b15)"><polygon points="3.5,17.2 34,16.4 34.5,18.6 4,19.6" fill="#66574b" stroke="#66574b" stroke-width="1" stroke-linejoin="round" opacity="1"/><polygon points="11.5,128 28.4,128 28.4,148.5 11.5,148.5" fill="#20150f" stroke="#20150f" stroke-width="3" stroke-linejoin="round" opacity="1"/><polygon points="41,120 47.7,120 47.7,136 41,136" fill="#1e1411" stroke="#1e1411" stroke-width="1" stroke-linejoin="round" opacity="1"/><polygon points="63,42 83,26 108,40 101,60 82,67.5 61,56" fill="#65554a" stroke="#65554a" stroke-width="3" stroke-linejoin="round" opacity="1"/><polygon points="86,30 106,42 100,57 88,48" fill="#46372f" stroke="#46372f" stroke-width="3" stroke-linejoin="round" opacity="1"/><polygon points="51,73 61.2,56.2 81.6,67.5 77,78.8 61.2,83.3" fill="#a59587" stroke="#a59587" stroke-width="2" stroke-linejoin="round" opacity="1"/><polygon points="56,72 63,62 75,68.5 71,76 62,79" fill="#b8a999" stroke="#b8a999" stroke-width="1" stroke-linejoin="round" opacity="1"/><polygon points="112,62 120,52 130,45 150,41 153,60 164,66 164,82 150,94 137,93 123,80" fill="#917d6d" stroke="#917d6d" stroke-width="3" stroke-linejoin="round" opacity="1"/><polygon points="116,63 127,59 145,57 150,74 141,84 129,76" fill="#ac9887" stroke="#ac9887" stroke-width="2" stroke-linejoin="round" opacity="1"/><polygon points="152,28 166,24 166,64 154,58" fill="#45352c" stroke="#45352c" stroke-width="2" stroke-linejoin="round" opacity="1"/><ellipse cx="104" cy="82.2" rx="14.6" ry="15" fill="#8a7868" opacity="1" transform="rotate(0 104 82.2)"/><ellipse cx="100" cy="78" rx="8" ry="7.5" fill="#a99786" opacity="1" transform="rotate(0 100 78)"/><ellipse cx="107" cy="86" rx="5" ry="4" fill="#5f4e43" opacity="1" transform="rotate(0 107 86)"/><polygon points="130,93 148,92 161.6,111 162.7,131 154.8,131 150.3,111" fill="#b09e8d" stroke="#b09e8d" stroke-width="3" stroke-linejoin="round" opacity="1"/><polygon points="148,139 157,131 163,132.5 163,147 153,146" fill="#a89685" stroke="#a89685" stroke-width="1.5" stroke-linejoin="round" opacity="1"/><polygon points="57,98 62,84 76,81 83,94 83.5,105.3 77,122.4 66,123.5 58.5,112" fill="#a89888" stroke="#a89888" stroke-width="3" stroke-linejoin="round" opacity="1"/><polygon points="61,99 72,90 79,101 74,115 64,112" fill="#c8b9a9" stroke="#c8b9a9" stroke-width="2" stroke-linejoin="round" opacity="1"/><polygon points="61,125.7 77,123.4 88,137 88,160 77,158 70,147" fill="#837365" stroke="#837365" stroke-width="3" stroke-linejoin="round" opacity="1"/></g><g filter="url(#b15)"><polygon points="41,30 49,32 47,58 42,56" fill="#17100d" stroke="#17100d" stroke-width="1" stroke-linejoin="round" opacity="1"/><polygon points="84,100 94,97 98,116 88,119" fill="#2a1e19" stroke="#2a1e19" stroke-width="1" stroke-linejoin="round" opacity="1"/></g><rect x="-2" y="-2" width="168.2" height="251.3" fill="none" stroke="#120c0a" stroke-width="9" opacity="0.55" filter="url(#b3)"/></g></svg>
<span class="t" style="left:468.52px;top:279.00px;font-size:8.80px;line-height:10.56px;color:#0c0c0c;transform-origin:0 0;transform:rotate(-90deg) scaleX(0.9050);font-weight:bold;">Epson Legacy Baryta</span>
<span class="t" style="left:482.26px;top:266.00px;font-size:8.40px;line-height:10.08px;color:#747474;transform-origin:0 0;transform:rotate(-90deg) scaleX(0.8726);">ronmartblog.com</span>
<div style="left:172.00px;top:395.80px;width:424.60px;height:22.10px;background:linear-gradient(#3c3b3d,#454446);border-top:1.2px solid #141414;"></div>
<div style="left:176.60px;top:403.00px;width:9.60px;height:9.40px;background:#504f52;border:0.5px solid #48474a;"></div>
<svg style="left:195.5px;top:403.5px" width="26" height="10"><path d="M0.5 4.6l4.6-3.8v2.4h4.6v2.8h-4.6v2.4z" fill="#525154"/><path d="M25 4.6l-4.6-3.8v2.4h-4.6v2.8h4.6v2.4z" fill="#525154"/></svg>
<span class="t" style="left:227.60px;top:404.70px;font-size:7.00px;line-height:8.40px;color:#8d8d8d;transform:scaleX(0.8059);">Use:</span>
<span class="t" style="left:243.00px;top:404.70px;font-size:7.00px;line-height:8.40px;color:#cfcfcf;transform:scaleX(0.8474);">Selected Photos</span>
<svg style="left:289.4px;top:405.4px" width="4" height="7"><path d="M0.4 2.4l1.4-1.8 1.4 1.8zM0.4 3.8l1.4 1.8 1.4-1.8z" fill="#9a9a9a"/></svg>
<span class="t" style="left:557.60px;top:404.90px;font-size:7.00px;line-height:8.40px;color:#b0b0b0;transform:scaleX(0.7987);">Page 1 of 1</span>
<div style="left:597.20px;top:57.80px;width:158.60px;height:339.20px;background:#202021;"></div>
<div style="left:757.10px;top:73.70px;width:4.80px;height:301.50px;background:#8a8a8c;border-radius:2px;"></div>
<div style="left:597.20px;top:58.20px;width:158.60px;height:14.20px;background:linear-gradient(#222223,#2c2b2d 35%,#302f31);"></div>
<span class="t" style="left:690.70px;top:60.20px;font-size:8.50px;line-height:10.20px;color:#c9c9c9;transform:scaleX(0.8783);">Image Settings</span>
<svg style="left:746.10px;top:63.20px" width="6" height="6"><path d="M0.2 0.5h5l-2.5 4.4z" fill="#d0d0d0"/></svg>
<div style="left:600.80px;top:72.80px;width:152.50px;height:58.80px;background:#4f4e50;"></div>
<div style="left:600.80px;top:107.40px;width:152.50px;height:0.80px;background:#333;"></div>
<div style="left:605.40px;top:76.50px;width:5.60px;height:5.60px;border:0.8px solid #363636;background:#474747;"></div>
<span class="t" style="left:615.60px;top:75.70px;font-size:7.00px;line-height:8.40px;color:#a6a6a6;transform:scaleX(0.8752);">Zoom to Fill</span>
<svg style="left:605.90px;top:86.20px" width="7" height="7"><path d="M0.8 3.3l1.5 1.7L5.0 0.8" fill="none" stroke="#f4f4f4" stroke-width="1.15"/></svg>
<span class="t" style="left:615.60px;top:86.30px;font-size:7.00px;line-height:8.40px;color:#dedede;transform:scaleX(0.8445);">Rotate to Fit</span>
<div style="left:605.40px;top:96.90px;width:5.60px;height:5.60px;border:0.8px solid #363636;background:#474747;"></div>
<span class="t" style="left:615.60px;top:96.10px;font-size:7.00px;line-height:8.40px;color:#a6a6a6;transform:scaleX(0.8263);">Repeat One Photo per Page</span>
<div style="left:605.40px;top:112.90px;width:5.60px;height:5.60px;border:0.8px solid #363636;background:#474747;"></div>
<span class="t" style="left:615.60px;top:112.10px;font-size:7.00px;line-height:8.40px;color:#a6a6a6;transform:scaleX(0.8382);">Stroke Border</span>
<div style="left:731.20px;top:113.00px;width:15.60px;height:5.40px;background:#3a3a3a;"></div>
<span class="t" style="left:618.40px;top:122.62px;font-size:5.80px;line-height:6.96px;color:#5e5e5e;transform:scaleX(0.9848);">Width</span>
<div style="left:636.60px;top:125.00px;width:84.00px;height:1.30px;background:#383838;"></div>
<svg style="left:641.6px;top:122.4px" width="7" height="6"><path d="M0.5 5.2v-2.2l2.6-2.4 2.6 2.4v2.2z" fill="#2c2c2c" stroke="#1a1a1a" stroke-width="0.5"/></svg>
<span class="t" style="left:731.60px;top:122.62px;font-size:5.80px;line-height:6.96px;color:#5a5a5a;transform:scaleX(0.9648);">0.2 pt</span>
<div style="left:597.20px;top:133.00px;width:158.60px;height:13.60px;background:linear-gradient(#222223,#2c2b2d 35%,#302f31);"></div>
<div style="left:597.20px;top:146.60px;width:158.60px;height:1.80px;background:#1a1a1a;"></div>
<span class="t" style="left:717.10px;top:135.60px;font-size:8.50px;line-height:10.20px;color:#c9c9c9;transform:scaleX(0.9169);">Layout</span>
<svg style="left:746.00px;top:138.00px" width="6" height="6"><path d="M4.6 0.3v5l-4.2-2.5z" fill="#d0d0d0"/></svg>
<div style="left:597.20px;top:148.40px;width:158.60px;height:13.60px;background:linear-gradient(#222223,#2c2b2d 35%,#302f31);"></div>
<div style="left:597.20px;top:162.00px;width:158.60px;height:1.80px;background:#1a1a1a;"></div>
<span class="t" style="left:715.90px;top:151.00px;font-size:8.50px;line-height:10.20px;color:#c9c9c9;transform:scaleX(0.9134);">Guides</span>
<svg style="left:746.00px;top:153.40px" width="6" height="6"><path d="M4.6 0.3v5l-4.2-2.5z" fill="#d0d0d0"/></svg>
<div style="left:597.20px;top:163.80px;width:158.60px;height:13.60px;background:linear-gradient(#222223,#2c2b2d 35%,#302f31);"></div>
<div style="left:597.20px;top:177.40px;width:158.60px;height:1.80px;background:#1a1a1a;"></div>
<span class="t" style="left:724.10px;top:166.40px;font-size:8.50px;line-height:10.20px;color:#c9c9c9;transform:scaleX(0.8261);">Page</span>
<svg style="left:746.00px;top:168.80px" width="6" height="6"><path d="M4.6 0.3v5l-4.2-2.5z" fill="#d0d0d0"/></svg>
<div style="left:597.20px;top:179.20px;width:158.60px;height:14.20px;background:linear-gradient(#222223,#2c2b2d 35%,#302f31);"></div>
<span class="t" style="left:710.90px;top:181.60px;font-size:8.50px;line-height:10.20px;color:#c9c9c9;transform:scaleX(0.8824);">Print Job</span>
<svg style="left:745.90px;top:184.20px" width="6" height="6"><path d="M0.2 0.5h5l-2.5 4.4z" fill="#d0d0d0"/></svg>
<div style="left:600.80px;top:193.60px;width:152.50px;height:202.60px;background:#4f4e50;"></div>
<div style="left:600.80px;top:208.80px;width:152.50px;height:0.80px;background:#353535;"></div>
<div style="left:600.80px;top:224.80px;width:152.50px;height:0.80px;background:#353535;"></div>
<div style="left:600.80px;top:281.40px;width:152.50px;height:0.80px;background:#353535;"></div>
<span class="t" style="left:615.60px;top:197.30px;font-size:7.00px;line-height:8.40px;color:#a6a6a6;transform:scaleX(0.8955);">Print to:</span>
<span class="t" style="left:719.20px;top:197.30px;font-size:7.00px;line-height:8.40px;color:#dcdcdc;transform:scaleX(0.8924);">Printer</span>
<svg style="left:740.80px;top:197.80px" width="4" height="7"><path d="M0.3 2.6l1.5-2 1.5 2zM0.3 3.8l1.5 2 1.5-2z" fill="#a0a0a0"/></svg>
<div style="left:605.40px;top:214.50px;width:5.60px;height:5.60px;border:0.8px solid #363636;background:#474747;"></div>
<span class="t" style="left:615.60px;top:213.60px;font-size:7.00px;line-height:8.40px;color:#a6a6a6;transform:scaleX(0.8689);">Draft Mode Printing</span>
<svg style="left:605.90px;top:229.20px" width="7" height="7"><path d="M0.8 3.3l1.5 1.7L5.0 0.8" fill="none" stroke="#f4f4f4" stroke-width="1.15"/></svg>
<span class="t" style="left:615.60px;top:229.30px;font-size:7.00px;line-height:8.40px;color:#dedede;transform:scaleX(0.8499);">Print Resolution</span>
<span class="t" style="left:727.40px;top:229.30px;font-size:7.00px;line-height:8.40px;color:#e4e4e4;transform:scaleX(0.8391);">360</span>
<span class="t" style="left:739.40px;top:229.74px;font-size:6.60px;line-height:7.92px;color:#777;transform:scaleX(0.8629);">ppi</span>
<div style="left:605.40px;top:246.30px;width:5.60px;height:5.60px;border:0.8px solid #363636;background:#474747;"></div>
<span class="t" style="left:615.60px;top:245.30px;font-size:7.00px;line-height:8.40px;color:#909090;transform:scaleX(0.8459);">Print Sharpening :</span>
<span class="t" style="left:727.00px;top:245.74px;font-size:6.60px;line-height:7.92px;color:#707070;transform:scaleX(0.8755);">Low</span>
<svg style="left:740.80px;top:246.00px" width="4" height="7"><path d="M0.3 2.6l1.5-2 1.5 2zM0.3 3.8l1.5 2 1.5-2z" fill="#1e1e1e"/></svg>
<span class="t" style="left:615.60px;top:254.14px;font-size:6.60px;line-height:7.92px;color:#6a6a6a;transform:scaleX(0.8372);">Media Type:</span>
<span class="t" style="left:720.00px;top:254.34px;font-size:6.60px;line-height:7.92px;color:#6a6a6a;transform:scaleX(0.8726);">Glossy</span>
<svg style="left:740.80px;top:254.60px" width="4" height="7"><path d="M0.3 2.6l1.5-2 1.5 2zM0.3 3.8l1.5 2 1.5-2z" fill="#1e1e1e"/></svg>
<svg style="left:605.90px;top:269.70px" width="7" height="7"><path d="M0.8 3.3l1.5 1.7L5.0 0.8" fill="none" stroke="#f4f4f4" stroke-width="1.15"/></svg>
<span class="t" style="left:615.60px;top:269.80px;font-size:7.00px;line-height:8.40px;color:#dedede;transform:scaleX(0.8664);">16 Bit Output</span>
<span class="t" style="left:615.60px;top:286.50px;font-size:7.00px;line-height:8.40px;color:#d4d4d4;transform:scaleX(0.8634);">Color Management</span>
<svg style="left:743.10px;top:287.80px" width="6" height="6"><path d="M0.2 0.5h5l-2.5 4.4z" fill="#2a2a2a"/></svg>
<span class="t" style="left:615.60px;top:301.50px;font-size:7.00px;line-height:8.40px;color:#9a9a9a;transform:scaleX(0.7838);">Profile :</span>
<span class="t" style="left:685.00px;top:301.50px;font-size:7.00px;line-height:8.40px;color:#dcdcdc;transform:scaleX(0.8610);">Managed by Printer</span>
<svg style="left:740.80px;top:302.00px" width="4" height="7"><path d="M0.3 2.6l1.5-2 1.5 2zM0.3 3.8l1.5 2 1.5-2z" fill="#a0a0a0"/></svg>
<span class="t" style="left:615.60px;top:311.74px;font-size:6.60px;line-height:7.92px;color:#5e5e5e;transform:scaleX(0.7958);">Intent:</span>
<span class="t" style="left:687.40px;top:311.74px;font-size:6.60px;line-height:7.92px;color:#5a5a5a;transform:scaleX(0.8747);">Perceptual</span>
<div style="left:721.20px;top:312.40px;width:0.60px;height:5.60px;background:#5a5a5a;"></div>
<span class="t" style="left:727.40px;top:311.74px;font-size:6.60px;line-height:7.92px;color:#5a5a5a;transform:scaleX(0.8387);">Relative</span>
<div style="left:605.40px;top:327.90px;width:5.60px;height:5.60px;border:0.8px solid #363636;background:#474747;"></div>
<span class="t" style="left:615.60px;top:326.90px;font-size:7.00px;line-height:8.40px;color:#a6a6a6;transform:scaleX(0.8946);">Print Adjustment</span>
<svg style="left:743.10px;top:328.20px" width="6" height="6"><path d="M0.2 0.5h5l-2.5 4.4z" fill="#2a2a2a"/></svg>
<span class="t" style="left:617.80px;top:341.46px;font-size:6.40px;line-height:7.68px;color:#5c5c5c;transform:scaleX(0.9061);">Brightness</span>
<span class="t" style="left:623.20px;top:350.86px;font-size:6.40px;line-height:7.68px;color:#5c5c5c;transform:scaleX(0.9095);">Contrast</span>
<div style="left:650.60px;top:344.30px;width:72.60px;height:1.30px;background:#353535;"></div>
<svg style="left:683.10px;top:342.00px" width="7" height="6"><path d="M0.5 5.2v-2.2l2.6-2.4 2.6 2.4v2.2z" fill="#2a2a2a" stroke="#1a1a1a" stroke-width="0.5"/></svg>
<div style="left:650.60px;top:353.70px;width:72.60px;height:1.30px;background:#353535;"></div>
<svg style="left:650.10px;top:351.40px" width="7" height="6"><path d="M0.5 5.2v-2.2l2.6-2.4 2.6 2.4v2.2z" fill="#2a2a2a" stroke="#1a1a1a" stroke-width="0.5"/></svg>
<div style="left:739.60px;top:343.00px;width:1.20px;height:12.60px;background:#444;"></div>
<div style="left:606.20px;top:364.80px;width:14.20px;height:14.20px;border-radius:50%;background:#cfcfcf;border:0.8px solid #e4e4e4;"></div>
<span class="t" style="left:611.38px;top:365.30px;font-size:11.50px;line-height:13.80px;color:#1a1a1a;font-weight:bold;">!</span>
<span class="t" style="left:625.60px;top:366.32px;font-size:6.30px;line-height:7.56px;color:#ababab;font-style:italic;transform:scaleX(0.8215);">When selecting &quot;Managed by Printer,&quot; remember to</span>
<span class="t" style="left:625.60px;top:373.62px;font-size:6.30px;line-height:7.56px;color:#ababab;font-style:italic;transform:scaleX(0.8463);">turn on color management in the Print dialog.</span>
<div style="left:597.20px;top:396.60px;width:161.80px;height:21.60px;background:#262527;"></div>
<div style="left:597.20px;top:419.00px;width:161.80px;height:0.70px;background:#262626;"></div>
<div style="left:598.80px;top:401.00px;width:76.60px;height:15.00px;background:linear-gradient(#464548,#3b3a3d);border-radius:1.5px;border:0.6px solid #222;box-shadow:inset 0 0.6px 0 #56555a;"></div>
<span class="t" style="left:629.60px;top:403.70px;font-size:8.50px;line-height:10.20px;color:#b6b6b6;transform:scaleX(0.8582);">Print</span>
<div style="left:678.60px;top:401.00px;width:75.20px;height:15.00px;background:linear-gradient(#464548,#3b3a3d);border-radius:1.5px;border:0.6px solid #222;box-shadow:inset 0 0.6px 0 #56555a;"></div>
<span class="t" style="left:703.50px;top:403.70px;font-size:8.50px;line-height:10.20px;color:#b6b6b6;transform:scaleX(0.8025);">Printer...</span>
<div style="left:676.20px;top:398.40px;width:1.20px;height:1.20px;background:#777;border-radius:50%;"></div>
</div></body></html>
